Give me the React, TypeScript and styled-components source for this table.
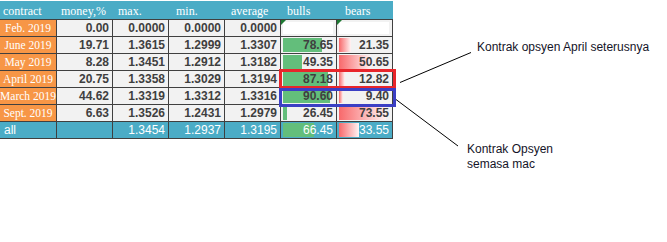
import React from 'react';
import styled, { createGlobalStyle } from 'styled-components';

const GlobalStyle = createGlobalStyle`
  html, body {
    margin: 0;
    padding: 0;
    background: #ffffff;
  }
`;

const Page = styled.div`
  position: relative;
  display: flex;
  flex-direction: row;
  align-items: flex-start;
  width: 667px;
  height: 242px;
  overflow: hidden;
`;

const Sheet = styled.div`
  position: relative;
  display: flex;
  flex-direction: column;
  margin-top: 1px;
  width: 393px;
`;

const HeaderRow = styled.div`
  display: grid;
  grid-template-columns: 57px repeat(6, 56px);
  height: 18px;
  background: #4bacc6;
`;

const HeaderCell = styled.div<{ $indent: number }>`
  display: flex;
  align-items: flex-end;
  padding: 0 0 2px ${(p) => p.$indent}px;
  font-family: 'Liberation Serif', 'Times New Roman', serif;
  font-size: 12px;
  line-height: 12px;
  color: #ffffff;
  white-space: nowrap;
`;

const Row = styled.div<{ $total?: boolean }>`
  display: grid;
  grid-template-columns: 57px repeat(6, 56px);
  height: 16px;
  border-top: 1px solid #404040;
  border-bottom: ${(p) => (p.$total ? '1px solid #404040' : 'none')};
  background: ${(p) => (p.$total ? '#4bacc6' : '#f2f2f2')};
`;

const LabelCell = styled.div<{ $total?: boolean }>`
  display: flex;
  align-items: center;
  justify-content: ${(p) => (p.$total ? 'flex-start' : 'center')};
  padding-left: ${(p) => (p.$total ? '4px' : '0')};
  border-right: 1px solid #404040;
  background: ${(p) => (p.$total ? '#4bacc6' : '#f79646')};
  font-family: ${(p) => (p.$total ? "'Liberation Sans', Arial, sans-serif" : "'Liberation Serif', 'Times New Roman', serif")};
  font-size: ${(p) => (p.$total ? '12px' : '11.5px')};
  color: #ffffff;
  white-space: nowrap;
  overflow: visible;
`;

const NumCell = styled.div<{ $total?: boolean }>`
  position: relative;
  display: flex;
  align-items: center;
  justify-content: flex-end;
  padding-right: 3px;
  border-right: 1px solid #404040;
  font-family: 'Liberation Sans', Arial, sans-serif;
  font-size: 12px;
  font-weight: ${(p) => (p.$total ? 400 : 700)};
  color: ${(p) => (p.$total ? '#ffffff' : '#3f3f3f')};
`;

const Value = styled.span`
  position: relative;
  z-index: 1;
`;

const DataBar = styled.div<{ $kind: 'bull' | 'bear' }>`
  position: absolute;
  left: 2px;
  top: 1px;
  bottom: 1px;
  background: ${(p) =>
    p.$kind === 'bull' ? '#63be7b' : 'linear-gradient(to right, #f8696b, #fff4f4)'};
`;

const EmptyFill = styled.div`
  position: absolute;
  left: 2px;
  right: 3px;
  top: 2px;
  bottom: 2px;
  background: #ffffff;
`;

const Marker = styled.div`
  position: absolute;
  left: 0;
  top: 0;
  width: 0;
  height: 0;
  border-top: 5px solid #1e7a33;
  border-right: 5px solid transparent;
  z-index: 2;
`;

const Highlight = styled.div<{ $color: string; $top: number; $height: number; $width: number }>`
  position: absolute;
  left: 279px;
  top: ${(p) => p.$top}px;
  width: 117px;
  height: ${(p) => p.$height}px;
  box-sizing: border-box;
  border: ${(p) => p.$width}px solid ${(p) => p.$color};
  z-index: 3;
`;

const Notes = styled.div`
  display: flex;
  flex-direction: column;
  font-family: 'Liberation Sans', Arial, sans-serif;
  font-size: 12px;
  line-height: 15px;
  color: #141428;
`;

const Note = styled.div<{ $left: number; $top: number }>`
  margin-left: ${(p) => p.$left}px;
  margin-top: ${(p) => p.$top}px;
  white-space: nowrap;
`;

const Leaders = styled.svg`
  position: absolute;
  left: 0;
  top: 0;
  pointer-events: none;
`;

type Line = {
  label: string;
  money: string;
  max: string;
  min: string;
  avg: string;
  bulls?: number;
  bears?: number;
};

const rows: Line[] = [
  { label: 'Feb. 2019', money: '0.00', max: '0.0000', min: '0.0000', avg: '0.0000' },
  { label: 'June 2019', money: '19.71', max: '1.3615', min: '1.2999', avg: '1.3307', bulls: 78.65, bears: 21.35 },
  { label: 'May 2019', money: '8.28', max: '1.3451', min: '1.2912', avg: '1.3182', bulls: 49.35, bears: 50.65 },
  { label: 'April 2019', money: '20.75', max: '1.3358', min: '1.3029', avg: '1.3194', bulls: 87.18, bears: 12.82 },
  { label: 'March 2019', money: '44.62', max: '1.3319', min: '1.3312', avg: '1.3316', bulls: 90.6, bears: 9.4 },
  { label: 'Sept. 2019', money: '6.63', max: '1.3526', min: '1.2431', avg: '1.2979', bulls: 26.45, bears: 73.55 },
];

const total: Line = { label: 'all', money: '', max: '1.3454', min: '1.2937', avg: '1.3195', bulls: 66.45, bears: 33.55 };

const headers: [string, number][] = [
  ['contract', 3], ['money,%', 4], ['max.', 5], ['min.', 7], ['average', 6], ['bulls', 6], ['bears', 8],
];

// excel style data bars: min value gets a stub, max gets the full run
const barWidth = (v: number, lo: number): number => 4 + (v - lo) * 0.67;

const BarCell = ({ value, kind, totalRow }: { value?: number; kind: 'bull' | 'bear'; totalRow?: boolean }) => (
  <NumCell $total={totalRow}>
    {value === undefined ? (
      <>
        <EmptyFill />
        <Marker />
      </>
    ) : (
      <>
        <DataBar $kind={kind} style={{ width: `${barWidth(value, kind === 'bull' ? 26.45 : 9.4)}px` }} />
        <Value>{value.toFixed(2)}</Value>
      </>
    )}
  </NumCell>
);

const SheetRow = ({ line, totalRow }: { line: Line; totalRow?: boolean }) => (
  <Row $total={totalRow}>
    <LabelCell $total={totalRow}>{line.label}</LabelCell>
    <NumCell $total={totalRow}>{line.money}</NumCell>
    <NumCell $total={totalRow}>{line.max}</NumCell>
    <NumCell $total={totalRow}>{line.min}</NumCell>
    <NumCell $total={totalRow}>{line.avg}</NumCell>
    <BarCell value={line.bulls} kind="bull" totalRow={totalRow} />
    <BarCell value={line.bears} kind="bear" totalRow={totalRow} />
  </Row>
);

const App = (): JSX.Element => (
  <Page>
    <GlobalStyle />
    <Sheet>
      <HeaderRow>
        {headers.map(([h, indent]) => (
          <HeaderCell key={h} $indent={indent}>{h}</HeaderCell>
        ))}
      </HeaderRow>
      {rows.map((r) => (
        <SheetRow key={r.label} line={r} />
      ))}
      <SheetRow line={total} totalRow />
      <Highlight $color="#e8252b" $top={68} $height={20} $width={3} />
      <Highlight $color="#3b3fc4" $top={87} $height={19} $width={3} />
    </Sheet>
    <Notes>
      <Note $left={84} $top={40}>Kontrak opsyen April seterusnya</Note>
      <Note $left={74} $top={87}>
        Kontrak Opsyen
        <br />
        semasa mac
      </Note>
    </Notes>
    <Leaders width="667" height="242">
      <line x1="400" y1="82.5" x2="471" y2="52.5" stroke="#000" strokeWidth="1" />
      <line x1="396" y1="99.5" x2="458" y2="146" stroke="#000" strokeWidth="1" />
    </Leaders>
  </Page>
);

export default App;
